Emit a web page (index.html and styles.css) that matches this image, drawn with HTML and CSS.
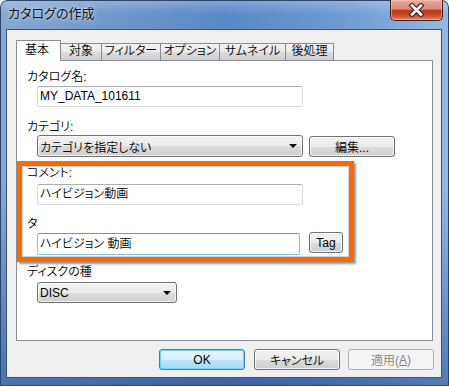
FILE: index.html
```html
<!DOCTYPE html>
<html lang="ja">
<head>
<meta charset="utf-8">
<title>カタログの作成</title>
<link rel="stylesheet" href="styles.css">
</head>
<body>
<div class="window">
  <div class="titlebar">
    <span class="title">カタログの作成</span>
    <div class="close">
      <svg width="17" height="14" viewBox="0 0 17 14">
        <path d="M4 2.5 L13 11.5 M13 2.5 L4 11.5" stroke="#3a2a28" stroke-width="5" stroke-linecap="square" fill="none"/>
        <path d="M4 2.5 L13 11.5 M13 2.5 L4 11.5" stroke="#ffffff" stroke-width="2.6" stroke-linecap="square" fill="none"/>
      </svg>
    </div>
  </div>
  <div class="client">
    <div class="tabs">
      <div class="tab selected w1">基本</div>
      <div class="tab w2">対象</div>
      <div class="tab w3">フィルター</div>
      <div class="tab w4">オプション</div>
      <div class="tab w5">サムネイル</div>
      <div class="tab w6">後処理</div>
    </div>
    <div class="panel">
      <div class="label l1">カタログ名:</div>
      <div class="textbox tb1">MY_DATA_101611</div>
      <div class="label l2">カテゴリ:</div>
      <div class="row r2">
        <div class="combo cb1"><span>カテゴリを指定しない</span><i class="arrow"></i></div>
        <div class="btn edit">編集...</div>
      </div>
      <div class="highlight">
        <div class="label l3">コメント:</div>
        <div class="textbox tb3">ハイビジョン動画</div>
        <div class="label l4">タ</div>
        <div class="row r4">
          <div class="textbox focus tb4">ハイビジョン 動画</div>
          <div class="btn tag">Tag</div>
        </div>
      </div>
      <div class="label l5">ディスクの種</div>
      <div class="combo cb5"><span>DISC</span><i class="arrow"></i></div>
    </div>
    <div class="buttons">
      <div class="btn dlg default">OK</div>
      <div class="btn dlg cancel">キャンセル</div>
      <div class="btn dlg disabled">適用(<u>A</u>)</div>
    </div>
  </div>
</div>
</body>
</html>
```

FILE: styles.css
```css
* { box-sizing: border-box; }
html, body { margin: 0; padding: 0; }
body {
  width: 449px;
  height: 386px;
  overflow: hidden;
  font-family: "Liberation Sans", "Noto Sans CJK JP", sans-serif;
  font-size: 12px;
  font-weight: 350;
  font-feature-settings: "palt" 1;
  color: #000;
  background: #fff;
}

.window {
  width: 449px;
  height: 386px;
  display: flex;
  flex-direction: column;
  border-radius: 7px 7px 0 0;
  background:
    linear-gradient(180deg, rgba(255,255,255,0.25) 0, rgba(255,255,255,0) 14px),
    linear-gradient(90deg, #86a8d4 0%, #6f97cd 25%, #5a88c6 50%, #6d99d3 75%, #94b9e6 100%);
  box-shadow: inset 0 0 0 1px #2c4468;
  position: relative;
}
.window::after {
  content: "";
  position: absolute;
  left: 0; right: 0; bottom: 0; height: 200px;
  background: linear-gradient(180deg, rgba(40,80,150,0) 0, rgba(30,70,140,0.55) 100%);
  pointer-events: none;
}

.titlebar {
  height: 29px;
  flex: none;
  display: flex;
  align-items: flex-start;
  justify-content: space-between;
  padding-left: 8px;
}
.title {
  font-size: 13px;
  line-height: 16px;
  margin-top: 6px;
  color: #111;
  font-weight: 400;
  text-shadow: 0 0 6px rgba(255,255,255,0.8), 0 0 2px rgba(255,255,255,0.6);
}
.close {
  width: 53px;
  height: 21px;
  margin-right: 6px;
  border: 1px solid #4a1e16;
  border-top: 0;
  border-radius: 0 0 5px 5px;
  background: linear-gradient(180deg, #e7ab9e 0%, #d88a78 45%, #c0381b 52%, #c9452a 75%, #e08a68 100%);
  box-shadow: inset 0 0 0 1px rgba(255,210,200,0.45);
  display: flex;
  align-items: center;
  justify-content: center;
}

.client {
  flex: 1;
  margin: 0 7px 8px 6px;
  border: 1px solid #34557f;
  background: #f0f0f0;
  padding: 10px 8px 7px 9px;
  display: flex;
  flex-direction: column;
  position: relative;
  z-index: 1;
}

.tabs {
  display: flex;
  align-items: flex-end;
  height: 21px;
  position: relative;
  z-index: 2;
}
.tab {
  height: 17px;
  margin-bottom: 1px;
  margin-left: -1px;
  border: 1px solid #898c95;
  border-bottom: 0;
  background: linear-gradient(180deg, #f2f2f2 0%, #ebebeb 50%, #dddddd 51%, #cfcfcf 100%);
  line-height: 15px;
  text-align: center;
  white-space: nowrap;
}
.tab.selected {
  height: 21px;
  margin-bottom: 0;
  margin-left: 0;
  background: #fff;
  line-height: 18px;
  padding-right: 3px;
}
.w1 { width: 45px; }
.w2 { width: 42px; }
.w3 { width: 60px; }
.w4 { width: 60px; }
.w5 { width: 67px; }
.w6 { width: 49px; }

.panel {
  width: 417px;
  height: 281px;
  flex: none;
  margin-top: -1px;
  border: 1px solid #898c95;
  background: #fff;
  padding: 9px 0 0 10px;
  display: flex;
  flex-direction: column;
  align-items: flex-start;
}

.label {
  line-height: 14px;
  height: 14px;
  white-space: nowrap;
}
.l2 { margin-top: 13px; }
.l4 { margin-top: 12px; }
.l5 { margin-top: 3px; }

.textbox {
  height: 21px;
  width: 266px;
  border: 1px solid #d5d9df;
  border-top-color: #abadb3;
  border-radius: 2px;
  background: #fff;
  padding-left: 2px;
  line-height: 19px;
  white-space: nowrap;
}
.tb1 { margin: 2px 0 0 10px; }
.tb3 { margin: 4px 0 0 10px; }
.textbox.focus {
  border-color: #8cbcea;
  border-top-color: #5b9ad8;
}
.tb4 { width: 263px; height: 22px; line-height: 20px; }

.row {
  display: flex;
  align-items: flex-start;
  margin-left: 10px;
}
.r2 { margin-top: 1px; }
.r4 { margin-top: 2px; }

.combo {
  display: flex;
  align-items: center;
  justify-content: space-between;
  height: 21px;
  border: 1px solid #707070;
  border-radius: 3px;
  background: linear-gradient(180deg, #f2f2f2 0%, #ebebeb 50%, #dddddd 51%, #cfcfcf 100%);
  box-shadow: inset 0 0 0 1px rgba(255,255,255,0.7);
  padding: 0 5px 0 2px;
  white-space: nowrap;
}
.cb1 { width: 266px; height: 22px; }
.cb5 { width: 140px; margin: 3px 0 0 10px; }
.arrow {
  width: 0;
  height: 0;
  border-left: 4px solid transparent;
  border-right: 4px solid transparent;
  border-top: 4px solid #000;
}

.btn {
  display: flex;
  align-items: center;
  justify-content: center;
  height: 21px;
  border: 1px solid #707070;
  border-radius: 3px;
  background: linear-gradient(180deg, #f2f2f2 0%, #ebebeb 50%, #dddddd 51%, #cfcfcf 100%);
  box-shadow: inset 0 0 0 1px rgba(255,255,255,0.75);
  white-space: nowrap;
}
.edit { width: 86px; margin: 1px 0 0 6px; }
.tag { width: 34px; height: 21px; margin: -1px 0 0 9px; }

.highlight {
  margin: 4px 0 0 -10px;
  width: 337px;
  border: 5px solid #f36b0b;
  box-shadow: inset 0 0 0 1px #d4d4d4, 2px 2px 2px rgba(0,0,0,0.4);
  padding: 0 0 2px 5px;
  display: flex;
  flex-direction: column;
  align-items: flex-start;
}

.buttons {
  display: flex;
  justify-content: flex-end;
  margin-top: 8px;
  margin-right: -1px;
}
.dlg { width: 86px; }
.cancel { margin-left: 9px; }
.disabled {
  margin-left: 8px;
  border-color: #adb2b5;
  background: #f4f4f4;
  box-shadow: none;
  color: #838383;
}
.default {
  border-color: #3c7fb1;
  background: linear-gradient(180deg, #eaf6fd 0%, #d9f0fc 50%, #bee6fd 51%, #a7d9f5 100%);
  box-shadow: inset 0 0 0 1px #6fd2f7;
}
```
